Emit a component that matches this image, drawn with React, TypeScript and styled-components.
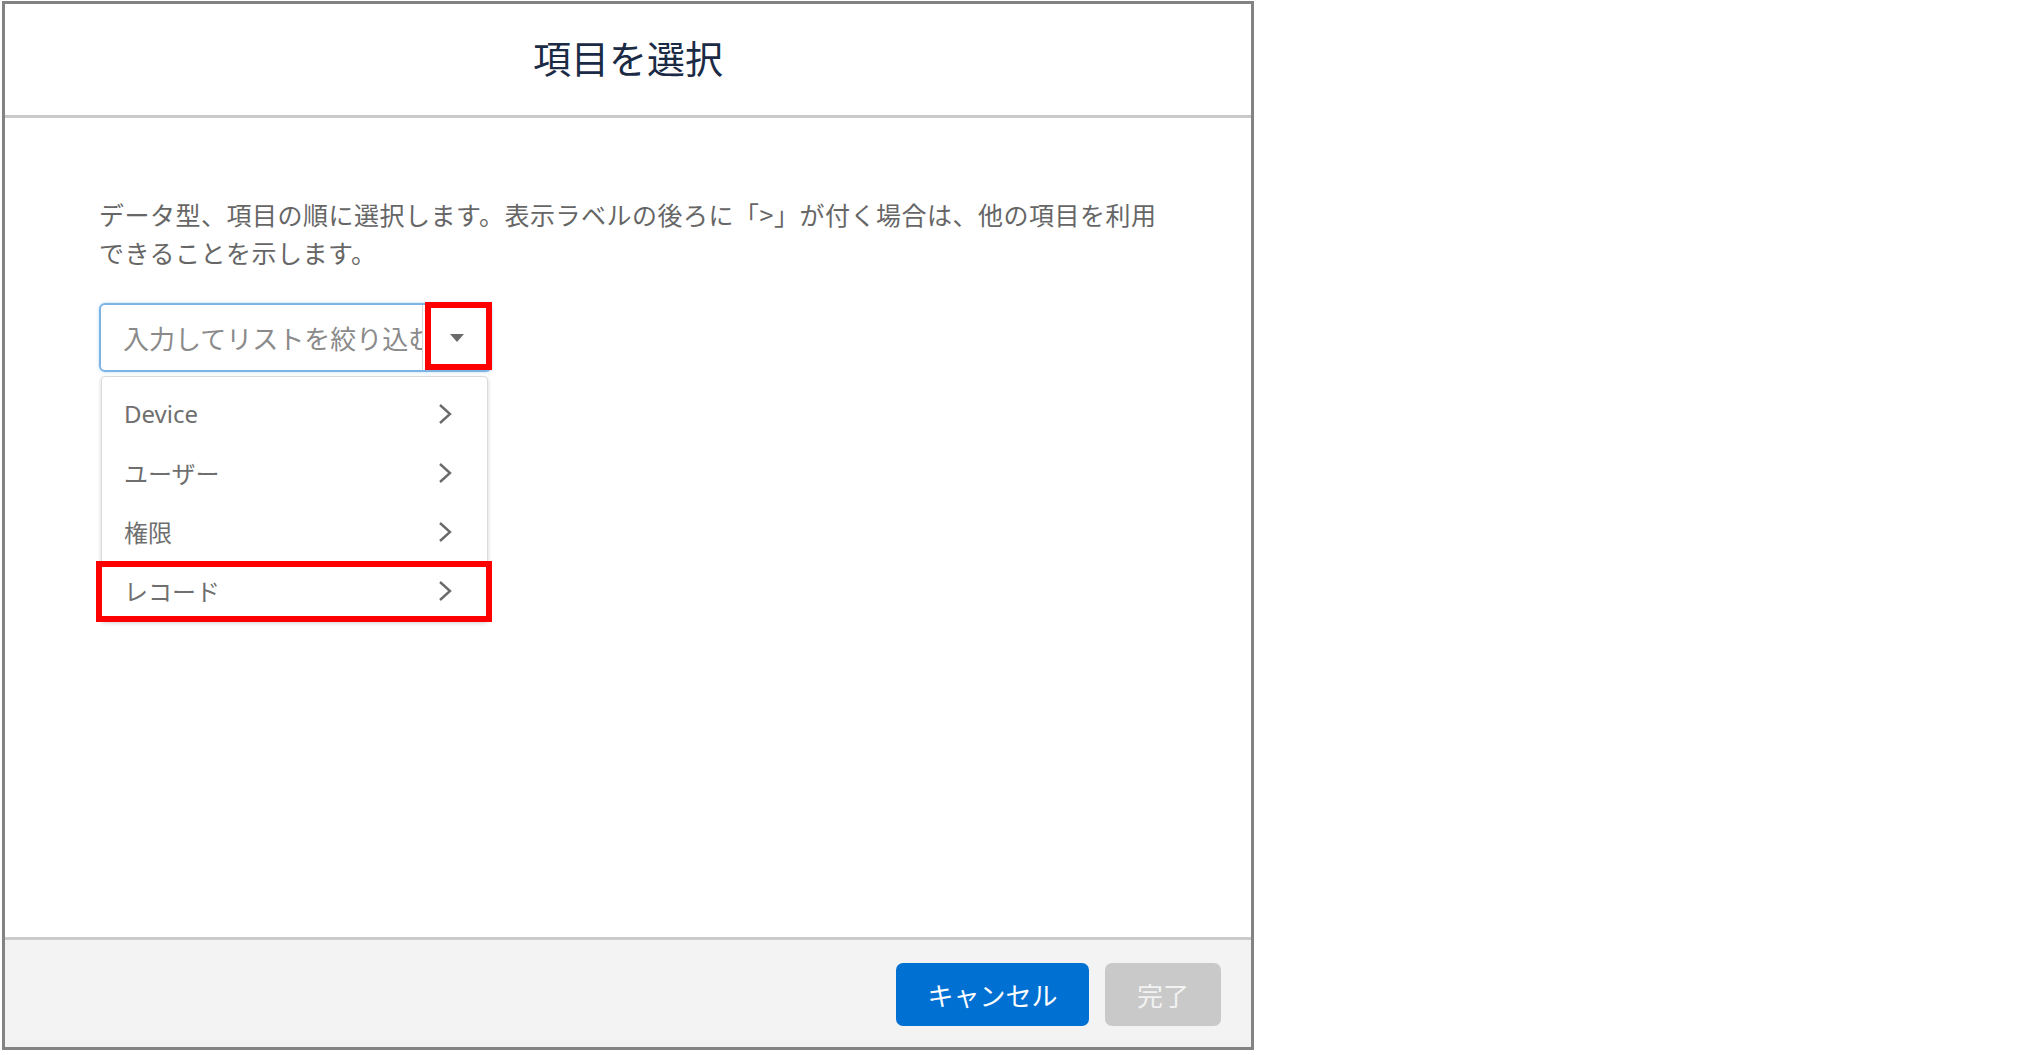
import styled, { createGlobalStyle } from "styled-components";

const GlobalStyle = createGlobalStyle`
  html, body {
    margin: 0;
    padding: 0;
    background: #fff;
  }
  body {
    font-family: "Noto Sans", "Noto Sans CJK JP", sans-serif;
  }
  *, *::before, *::after {
    box-sizing: border-box;
  }
`;

const items = [
  { label: "Device" },
  { label: "ユーザー" },
  { label: "権限" },
  { label: "レコード", marked: true },
];

function Chevron() {
  return (
    <svg width="14" height="22" viewBox="0 0 14 22">
      <path d="M2 2 L12 11 L2 20" fill="none" stroke="#6a6a6a" strokeWidth="2.4" />
    </svg>
  );
}

function Caret() {
  return (
    <svg width="14" height="8" viewBox="0 0 14 8">
      <polygon points="0,0 14,0 7,8" fill="#6b6b6b" />
    </svg>
  );
}

export default function App() {
  return (
    <Page>
      <GlobalStyle />
      <Dialog>
        <Header>
          <Title>項目を選択</Title>
        </Header>
        <Body>
          <Description>
            データ型、項目の順に選択します。表示ラベルの後ろに「&gt;」が付く場合は、他の項目を利用
            <br />
            できることを示します。
          </Description>
          <Field>
            <Combo>
              <FilterInput placeholder="入力してリストを絞り込む" />
              <Toggle $marked>
                <Caret />
              </Toggle>
            </Combo>
            <Menu>
              {items.map((it) => (
                <Item key={it.label} $marked={it.marked}>
                  <span>{it.label}</span>
                  <Chevron />
                </Item>
              ))}
            </Menu>
          </Field>
        </Body>
        <Footer>
          <Button $variant="brand">キャンセル</Button>
          <Button $variant="disabled">完了</Button>
        </Footer>
      </Dialog>
    </Page>
  );
}

const Page = styled.div`
  width: 2027px;
  height: 1055px;
  padding: 1px 0 0 2px;
`;

const Dialog = styled.section`
  width: 1252px;
  height: 1049px;
  border: 3px solid #838383;
  display: flex;
  flex-direction: column;
  background: #fff;
`;

const Header = styled.header`
  height: 114px;
  flex-shrink: 0;
  border-bottom: 3px solid #c9c9c9;
  padding-bottom: 6px;
  display: flex;
  align-items: center;
  justify-content: center;
`;

const Title = styled.h2`
  margin: 0;
  font-size: 38px;
  font-weight: 400;
  color: #1b2b45;
  font-family: "Noto Sans CJK JP", sans-serif;
`;

const Body = styled.div`
  flex: 1;
  padding: 77px 0 0 94px;
`;

const Description = styled.p`
  margin: 0 0 32px;
  font-size: 25px;
  line-height: 38px;
  letter-spacing: 0.5px;
  color: #666;
  font-family: "Noto Sans CJK JP", sans-serif;
`;

const Field = styled.div`
  width: 393px;
`;

const Combo = styled.div`
  height: 69px;
  display: flex;
  border: 2px solid #7db4e3;
  border-radius: 6px;
  box-shadow: 0 0 3px rgba(21, 137, 238, 0.35);
`;

const FilterInput = styled.input`
  flex: 1;
  min-width: 0;
  border: none;
  outline: none;
  background: transparent;
  padding: 0 0 0 22px;
  font-size: 26px;
  font-family: "Noto Sans CJK JP", sans-serif;
  border-radius: 6px 0 0 6px;
  &::placeholder {
    color: #8a8a8a;
  }
`;

const Toggle = styled.div<{ $marked?: boolean }>`
  position: relative;
  width: 68px;
  flex-shrink: 0;
  border-left: 1px solid #d6d6d6;
  display: flex;
  align-items: center;
  justify-content: center;
  &::after {
    content: "";
    display: ${(p) => (p.$marked ? "block" : "none")};
    position: absolute;
    top: -3px;
    bottom: 0;
    left: 2px;
    right: -2px;
    border: 6px solid #ff0000;
  }
`;

const Menu = styled.div`
  margin: 4px 0 0 2px;
  width: 387px;
  border: 1px solid #dddbda;
  border-radius: 4px;
  box-shadow: 0 2px 4px rgba(0, 0, 0, 0.18);
  padding-top: 7px;
  background: #fff;
`;

const Item = styled.div<{ $marked?: boolean }>`
  position: relative;
  height: 59px;
  display: flex;
  align-items: center;
  justify-content: space-between;
  padding: 0 35px 0 22px;
  font-size: 24px;
  color: #6f6f6f;
  &::after {
    content: "";
    display: ${(p) => (p.$marked ? "block" : "none")};
    position: absolute;
    top: 0;
    bottom: -2px;
    left: -6px;
    right: -5px;
    border: 6px solid #ff0000;
  }
`;

const Footer = styled.footer`
  height: 110px;
  flex-shrink: 0;
  border-top: 3px solid #cbcbcb;
  background: #f3f3f3;
  display: flex;
  justify-content: flex-end;
  align-items: flex-start;
  gap: 16px;
  padding: 23px 30px 0 0;
`;

const Button = styled.button<{ $variant: "brand" | "disabled" }>`
  height: 63px;
  border: none;
  border-radius: 7px;
  font-size: 26px;
  font-family: "Noto Sans CJK JP", sans-serif;
  padding: 0;
  width: ${(p) => (p.$variant === "brand" ? "193px" : "116px")};
  background: ${(p) => (p.$variant === "brand" ? "#0070d2" : "#c9c9c9")};
  color: ${(p) => (p.$variant === "brand" ? "#fff" : "#f2f2f2")};
`;
